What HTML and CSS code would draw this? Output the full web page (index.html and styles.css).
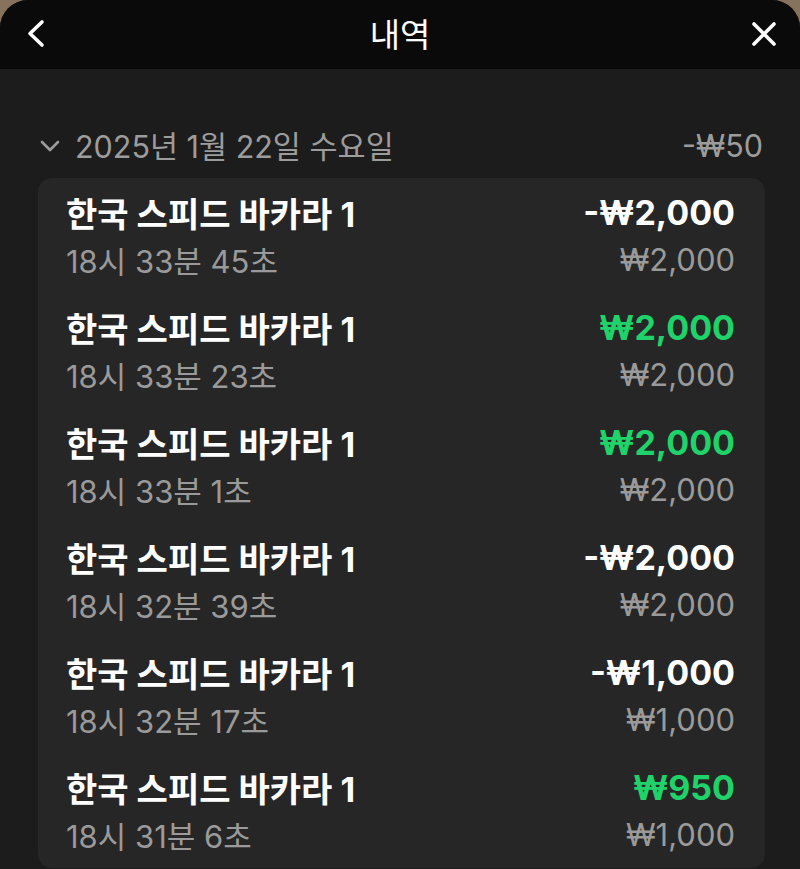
FILE: index.html
```html
<!DOCTYPE html>
<html lang="ko">
<head>
<meta charset="utf-8">
<title>내역</title>
<link rel="stylesheet" href="styles.css">
</head>
<body>
<div class="screen">
  <header class="topbar">
    <button class="icon-btn back" aria-label="뒤로">
      <svg width="24" height="30" viewBox="0 0 24 30"><polyline points="16,3 4,14.5 16,26" fill="none" stroke="#fff" stroke-width="3.6" stroke-linecap="round" stroke-linejoin="round"/></svg>
    </button>
    <h1 class="title">내역</h1>
    <button class="icon-btn close" aria-label="닫기">
      <svg width="28" height="28" viewBox="0 0 28 28"><path d="M4 4 L24 24 M24 4 L4 24" fill="none" stroke="#fff" stroke-width="3.6" stroke-linecap="round"/></svg>
    </button>
  </header>
  <main class="content">
    <div class="date-row">
      <div class="date-left">
        <svg class="chev" width="20" height="12" viewBox="0 0 20 12"><polyline points="2,2 10,10 18,2" fill="none" stroke="#9c9c9c" stroke-width="2.6" stroke-linecap="round" stroke-linejoin="round"/></svg>
        <span class="date">2025년 1월 22일 수요일</span>
      </div>
      <span class="date-total">-₩50</span>
    </div>
    <section class="card">
      <div class="row">
        <div class="row-line"><span class="game">한국 스피드 바카라 1</span><span class="amt">-₩2,000</span></div>
        <div class="row-line sub"><span>18시 33분 45초</span><span>₩2,000</span></div>
      </div>
      <div class="row">
        <div class="row-line"><span class="game">한국 스피드 바카라 1</span><span class="amt win">₩2,000</span></div>
        <div class="row-line sub"><span>18시 33분 23초</span><span>₩2,000</span></div>
      </div>
      <div class="row">
        <div class="row-line"><span class="game">한국 스피드 바카라 1</span><span class="amt win">₩2,000</span></div>
        <div class="row-line sub"><span>18시 33분 1초</span><span>₩2,000</span></div>
      </div>
      <div class="row">
        <div class="row-line"><span class="game">한국 스피드 바카라 1</span><span class="amt">-₩2,000</span></div>
        <div class="row-line sub"><span>18시 32분 39초</span><span>₩2,000</span></div>
      </div>
      <div class="row">
        <div class="row-line"><span class="game">한국 스피드 바카라 1</span><span class="amt">-₩1,000</span></div>
        <div class="row-line sub"><span>18시 32분 17초</span><span>₩1,000</span></div>
      </div>
      <div class="row">
        <div class="row-line"><span class="game">한국 스피드 바카라 1</span><span class="amt win">₩950</span></div>
        <div class="row-line sub"><span>18시 31분 6초</span><span>₩1,000</span></div>
      </div>
    </section>
  </main>
</div>
</body>
</html>
```
FILE: styles.css
```css
* { box-sizing: border-box; }
html, body {
  margin: 0;
  padding: 0;
  background: #86725d;
}
body {
  font-family: Inter, "Noto Sans CJK KR", sans-serif;
}
.screen {
  width: 800px;
  height: 869px;
  overflow: hidden;
  background: #1c1c1c;
  border-radius: 28px 28px 0 0;
}
.topbar {
  height: 69px;
  background: #0a0a0a;
  display: flex;
  align-items: center;
  justify-content: space-between;
  padding: 0 22px 0 26px;
}
.icon-btn {
  background: none;
  border: 0;
  padding: 0;
  display: flex;
  align-items: center;
  justify-content: center;
  margin-top: -2px;
}
.title {
  margin: 0;
  margin-top: -4px;
  font-family: "Noto Sans CJK KR", sans-serif;
  font-weight: 400;
  font-size: 33px;
  color: #fff;
  letter-spacing: 0;
}
.content {
  padding: 52px 35px 0 38px;
}
.date-row {
  height: 48px;
  margin-bottom: 9px;
  display: flex;
  align-items: center;
  justify-content: space-between;
  padding: 0 2px 0 2px;
  color: #9c9c9c;
  font-size: 30.5px;
}
.date-left {
  display: flex;
  align-items: center;
  gap: 15px;
}
.chev { margin-top: 2px; }
.card {
  background: #262626;
  border-radius: 14px;
  padding: 0 30px 0 28px;
}
.row {
  padding: 11px 0 10px;
}
.row-line {
  display: flex;
  justify-content: space-between;
  align-items: center;
  height: 47px;
}
.game {
  font-size: 34px;
  font-weight: 700;
  color: #fff;
}
.amt {
  font-size: 34px;
  font-weight: 700;
  color: #fff;
}
.amt.win { color: #1fd36a; }
.sub {
  font-size: 31px;
  color: #9a9a9a;
}
```
